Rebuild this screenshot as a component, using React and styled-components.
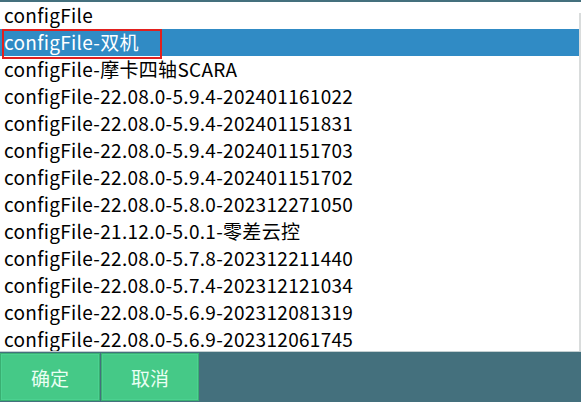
import React from "react";
import styled, { createGlobalStyle } from "styled-components";

const GlobalStyle = createGlobalStyle`
  html, body {
    margin: 0;
    padding: 0;
    background: #44707d;
  }
  body {
    font-family: "Noto Sans CJK SC", "Noto Sans", sans-serif;
  }
`

const Window = styled.div`
  width: 581px;
  height: 402px;
  display: flex;
  flex-direction: column;
  background: #44707d;
  padding-top: 2px;
  box-sizing: border-box;
  overflow: hidden;
`

const ListArea = styled.div`
  display: flex;
  height: 349px;
  background: #fff;
  border-bottom: 1px solid #c4cfd1;
`

const List = styled.div`
  flex: 1;
  overflow: hidden;
`

const Row = styled.div`
  position: relative;
  height: 27px;
  line-height: 26px;
  padding-left: 4px;
  font-size: 19px;
  letter-spacing: 0.3px;
  white-space: nowrap;
  color: ${p => (p.selected ? "#fff" : "#000")};
  background: ${p => (p.selected ? "#308bc5" : "transparent")};
`

const FocusBox = styled.div`
  position: absolute;
  left: 2px;
  top: 0;
  width: 160px;
  height: 30px;
  border: 2px solid #e2201e;
  box-sizing: border-box;
`

const ScrollTrack = styled.div`
  width: 2px;
  padding-top: 11px;
  background: #fff;
`

const ScrollThumb = styled.div`
  height: 100%;
  background: #d9dcdc;
`

const Footer = styled.div`
  flex: 1;
  display: flex;
  gap: 1px;
  padding: 1px 0;
`

const Button = styled.button`
  width: ${p => p.$width}px;
  height: 48px;
  margin: 0;
  background: #45c987;
  border: 1px solid #3aaf72;
  box-shadow: inset 0 0 0 1px #4bd190;
  color: #eafff3;
  font-family: "Noto Sans CJK SC", sans-serif;
  font-size: 19px;
  padding: 0;
`

const items = [
  "configFile",
  "configFile-双机",
  "configFile-摩卡四轴SCARA",
  "configFile-22.08.0-5.9.4-202401161022",
  "configFile-22.08.0-5.9.4-202401151831",
  "configFile-22.08.0-5.9.4-202401151703",
  "configFile-22.08.0-5.9.4-202401151702",
  "configFile-22.08.0-5.8.0-202312271050",
  "configFile-21.12.0-5.0.1-零差云控",
  "configFile-22.08.0-5.7.8-202312211440",
  "configFile-22.08.0-5.7.4-202312121034",
  "configFile-22.08.0-5.6.9-202312081319",
  "configFile-22.08.0-5.6.9-202312061745",
]

const App = () => {
  const selected = 1;

  return (
    <Window>
      <GlobalStyle />
      <ListArea>
        <List>
          {items.map((item, index) => (
            <Row key={index} selected={index === selected}>
              {item}
              {index === selected && <FocusBox />}
            </Row>
          ))}
        </List>
        <ScrollTrack>
          <ScrollThumb />
        </ScrollTrack>
      </ListArea>
      <Footer>
        <Button $width={100}>确定</Button>
        <Button $width={98}>取消</Button>
      </Footer>
    </Window>
  )
}

export default App
